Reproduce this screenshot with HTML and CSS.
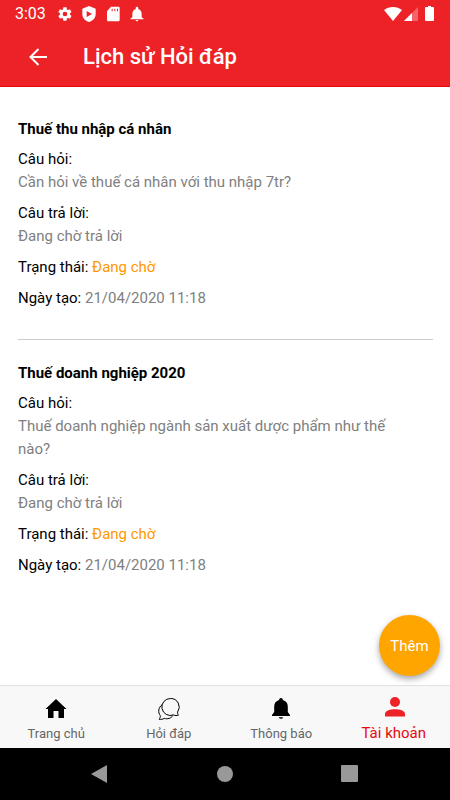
FILE: index.html
```html
<!DOCTYPE html>
<html lang="vi">
<head>
    <meta charset="UTF-8">
    <meta name="viewport" content="width=device-width, initial-scale=1">
    <title>Lịch sử Hỏi đáp</title>
    <link rel="stylesheet" href="styles.css">
</head>
<body>

<div class="screen">
    <!-- status bar -->
    <div class="statusbar">
        <span class="clock">3:03</span>
        <div class="status-left">
            <svg width="16" height="16" viewBox="0 0 24 24"><path d="M19.4 13c0-.3.1-.6.1-1s0-.7-.1-1l2.1-1.6c.2-.2.3-.4.1-.7l-2-3.4c-.1-.2-.4-.3-.6-.2l-2.5 1c-.5-.4-1.100-.7-1.700-1l-.4-2.600c0-.3-.2-.5-.5-.5h-4c-.2 0-.4.2-.5.5L9 5.100c-.6.3-1.200.6-1.700 1l-2.500-1c-.2-.1-.5 0-.6.2l-2 3.400c-.1.3-.1.5.1.7L4.500 11c0 .3-.1.600-.1 1s0 .7.1 1l-2.200 1.600c-.2.2-.2.4-.1.7l2 3.400c.1.2.4.3.6.2l2.500-1c.5.4 1.100.7 1.700 1l.4 2.600c0 .3.200.5.5.5h4c.2 0 .5-.2.5-.5l.4-2.600c.6-.3 1.200-.6 1.700-1l2.500 1c.2.1.5 0 .6-.2l2-3.400c.1-.3.100-.5-.1-.7zM12 15.500a3.500 3.500 0 1 1 0-7 3.500 3.500 0 0 1 0 7z"/></svg>
            <svg width="16" height="16" viewBox="0 0 24 24"><path fill-rule="evenodd" d="M12 0 2 4v8c0 6 4 10 10 12 6-2 10-6 10-12V4zM8.500 7.500l8 4.500-8 4.500z"/></svg>
            <svg width="16" height="16" viewBox="0 0 24 24"><path fill-rule="evenodd" d="M20 1H9L3 8v13c0 1.200.8 2 2 2h15c1.200 0 2-.8 2-2V3c0-1.200-.8-2-2-2zM10 4h1.500v4H10zm4 0h1.500v4H14zm4 0h1.500v4H18z"/></svg>
            <svg width="16" height="16" viewBox="0 0 24 24"><path d="M12 23a2 2 0 0 0 2-2h-4c0 1.100.9 2 2 2zm7-6v-5.500c0-3.200-1.800-6-5-6.700V3a2 2 0 0 0-4 0v1.800c-3.200.7-5 3.500-5 6.700V17l-3 2v1h20v-1z"/></svg>
        </div>
        <div class="status-right">
            <svg width="18" height="14" viewBox="0 0 18 14"><path d="M0 3C5-1 13-1 18 3L9 14z"/></svg>
            <svg width="14" height="14" viewBox="0 0 14 14"><path class="faded" d="M14 0v14H0z"/><path d="M8 6v8H0z"/></svg>
            <svg class="battery" width="9" height="15" viewBox="0 0 9 15"><path d="M3 0h3v1h2q1 0 1 1v12q0 1-1 1H1q-1 0-1-1V2q0-1 1-1h2z"/></svg>
        </div>
    </div>

    <header class="header">
        <button class="back" type="button" aria-label="Quay lại">
            <svg width="18" height="18" viewBox="0 0 18 18"><path d="M18 9H2M9.500 1 1.500 9l8 8"/></svg>
        </button>
        <h1>Lịch sử Hỏi đáp</h1>
    </header>

    <main class="content">
        <article class="item">
            <h2>Thuế thu nhập cá nhân</h2>
            <div class="field">
                <p>Câu hỏi:</p>
                <p class="value">Cần hỏi về thuế cá nhân với thu nhập 7tr?</p>
            </div>
            <div class="field">
                <p>Câu trả lời:</p>
                <p class="value">Đang chờ trả lời</p>
            </div>
            <p class="field">Trạng thái: <span class="waiting">Đang chờ</span></p>
            <p class="field">Ngày tạo: <span class="value">21/04/2020 11:18</span></p>
        </article>

        <article class="item">
            <h2>Thuế doanh nghiệp 2020</h2>
            <div class="field">
                <p>Câu hỏi:</p>
                <p class="value">Thuế doanh nghiệp ngành sản xuất dược phẩm như thế nào?</p>
            </div>
            <div class="field">
                <p>Câu trả lời:</p>
                <p class="value">Đang chờ trả lời</p>
            </div>
            <p class="field">Trạng thái: <span class="waiting">Đang chờ</span></p>
            <p class="field">Ngày tạo: <span class="value">21/04/2020 11:18</span></p>
        </article>
    </main>

    <div class="bottom">
        <button class="add" type="button">Thêm</button>

        <nav class="tabs">
            <a class="tab" href="#">
                <svg width="22" height="22" viewBox="0 0 22 22"><path d="M11 1 21.500 11H19v9h-5.500v-7h-5v7H3v-9H.5z"/></svg>
                <span>Trang chủ</span>
            </a>
            <a class="tab" href="#">
                <svg class="line" width="22" height="22" viewBox="0 0 22 22"><path d="M12.500.5a8.500 8.500 0 1 0 3 16.400c1.500.8 3.500.8 5 .3-.8-.8-1-2-.9-3.200A8.500 8.500 0 0 0 12.500.5z"/><path d="M4.300 6.500C.2 9.500-.2 14.500 2.300 17.600c.1 1.400-.3 2.700-1.200 3.700 1.800.3 3.700 0 5.200-.9 3.300.9 6.700.1 8.700-3"/></svg>
                <span>Hỏi đáp</span>
            </a>
            <a class="tab" href="#">
                <svg width="22" height="22" viewBox="0 0 22 22"><path d="M11 0a1.800 1.800 0 0 0-1.800 2C6 2.800 4.200 5.300 4.200 8.500V14L2 17v1h18v-1l-2.200-3V8.500c0-3.200-1.800-5.700-5-6.500A1.800 1.800 0 0 0 11 0zM8.800 19.200a2.300 2.300 0 0 0 4.400 0z"/></svg>
                <span>Thông báo</span>
            </a>
            <a class="tab active" href="#">
                <svg width="22" height="22" viewBox="0 0 22 22"><circle cx="12" cy="6" r="5"/><path d="M2 20.500V18c0-3.500 5.500-4.800 10-4.800S22 14.500 22 18v2.500z"/></svg>
                <span>Tài khoản</span>
            </a>
        </nav>

        <!-- android system keys -->
        <div class="syskeys">
            <svg width="18" height="18" viewBox="0 0 18 18"><path d="M16 0v18L0 9z"/></svg>
            <svg width="18" height="18" viewBox="0 0 18 18"><circle cx="9" cy="9" r="8"/></svg>
            <svg width="18" height="18" viewBox="0 0 18 18"><rect x="0" y="0" width="17" height="17" rx="1"/></svg>
        </div>
    </div>
</div>

</body>
</html>
```
FILE: styles.css
```css
* {
	box-sizing: border-box;
}

body {
	margin: 0;
	font-family: Roboto, "Noto Sans", sans-serif;
	font-size: 15px;
	line-height: 23px;
	color: #000;
	background: #fff;
}

h1, h2, p {
	margin: 0;
}

button {
	padding: 0;
	border: 0;
	font-family: inherit;
}

svg {
	display: block;
}

.screen {
	display: flex;
	flex-direction: column;
	min-height: 100vh;
}

/* status bar + header */
.statusbar {
	display: flex;
	align-items: center;
	height: 27px;
	padding: 0 16px 0 15px;
	color: #fff;
	background: #ec2227;
}

.statusbar svg {
	fill: #fff;
}

.clock {
	font-size: 16px;
	font-weight: 400;
}

.status-left {
	display: flex;
	gap: 8px;
	margin-left: 11px;
}

.status-right {
	display: flex;
	align-items: center;
	gap: 2px;
	margin-left: auto;
}

.faded {
	opacity: 0.3;
}

.battery {
	margin-left: 5px;
}

.header {
	display: flex;
	align-items: center;
	height: 60px;
	padding: 0 20px;
	color: #fff;
	background: #ec2227;
	box-shadow: inset 0 -1px #e60a0e;
}

.back {
	display: flex;
	align-items: center;
	justify-content: center;
	width: 36px;
	height: 36px;
	margin-right: 27px;
	background: none;
}

.back svg {
	fill: none;
	stroke: #fff;
	stroke-width: 2;
}

.header h1 {
	font-size: 22px;
	font-weight: 500;
	line-height: 30px;
}

/* question list */
.content {
	flex: 1;
	padding: 9px 17px 0 18px;
}

.item {
	padding: 22px 0 21px;
}

.item + .item {
	border-top: 1px solid #ccc;
}

.item h2 {
	margin-bottom: 7px;
	font-size: 15px;
	font-weight: 700;
}

.field {
	margin-bottom: 8px;
	padding-right: 20px;
}

.value {
	color: #808080;
}

.waiting {
	color: #ff9800;
}

/* tabs */
.bottom {
	position: sticky;
	bottom: 0;
}

.add {
	position: absolute;
	right: 10px;
	bottom: 124px;
	width: 61px;
	height: 61px;
	border-radius: 50%;
	font-size: 15px;
	color: #fff;
	background: #ffa500;
	box-shadow: 0 3px 6px rgba(0, 0, 0, 0.35);
}

.tabs {
	display: grid;
	grid-template-columns: repeat(4, 1fr);
	height: 63px;
	background: #f8f8f8;
	border-top: 1px solid #e0e0e0;
}

.tab {
	display: flex;
	flex-direction: column;
	align-items: center;
	gap: 4px;
	padding-top: 12px;
	font-size: 13px;
	line-height: 20px;
	color: #666;
	text-decoration: none;
}

.tab svg {
	fill: #000;
}

.tab .line {
	fill: none;
	stroke: #000;
	stroke-width: 1;
}

.active {
	gap: 5px;
	padding-top: 10px;
	font-size: 15px;
	color: #e60a0e;
}

.active svg {
	fill: #ec2227;
}

.syskeys {
	display: flex;
	align-items: center;
	justify-content: center;
	gap: 107px;
	height: 52px;
	background: #000;
}

.syskeys svg {
	fill: #999;
}
```
